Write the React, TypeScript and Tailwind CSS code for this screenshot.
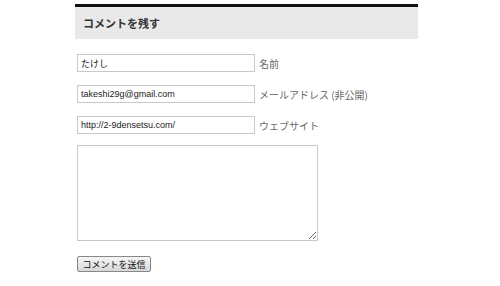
export default function App() {
  const font = { fontFamily: '"Noto Sans CJK JP", "DejaVu Sans", sans-serif' };
  return (
    <div className="w-[500px] h-[286px] bg-white pl-[75px] pt-[4px]" style={font}>
      <div className="w-[343px] border-t-[3px] border-[#111] bg-[#e9e9e9] h-[35px] flex items-center pl-[8px]">
        <span className="text-[11px] font-bold text-[#333]">コメントを残す</span>
      </div>
      <div className="pl-[2px] pt-[15px] flex flex-col">
        <div className="flex flex-col gap-[13px]">
          {[
            ["たけし", "名前"],
            ["takeshi29g@gmail.com", "メールアドレス (非公開)"],
            ["http://2-9densetsu.com/", "ウェブサイト"],
          ].map(([v, l]) => (
            <div key={l} className="flex items-center h-[18px]">
              <input
                readOnly
                value={v}
                className="w-[178px] h-[18px] border border-[#c8c8c8] px-[3px] text-[9px] text-[#222] outline-none"
                style={{ fontFamily: '"Liberation Sans", "Noto Sans CJK JP", sans-serif' }}
              />
              <span className="ml-[4px] text-[10px] text-[#666]">{l}</span>
            </div>
          ))}
        </div>
        <textarea
          readOnly
          className="mt-[11px] w-[241px] h-[96px] border border-[#c8c8c8] outline-none resize"
        />
        <div className="mt-[15px] flex">
          <button className="w-[74px] h-[16px] rounded-[2px] border border-[#888] bg-gradient-to-b from-[#f6f6f6] to-[#d8d8d8] text-[9px] text-[#111] leading-none">
            コメントを送信
          </button>
        </div>
      </div>
    </div>
  );
}
